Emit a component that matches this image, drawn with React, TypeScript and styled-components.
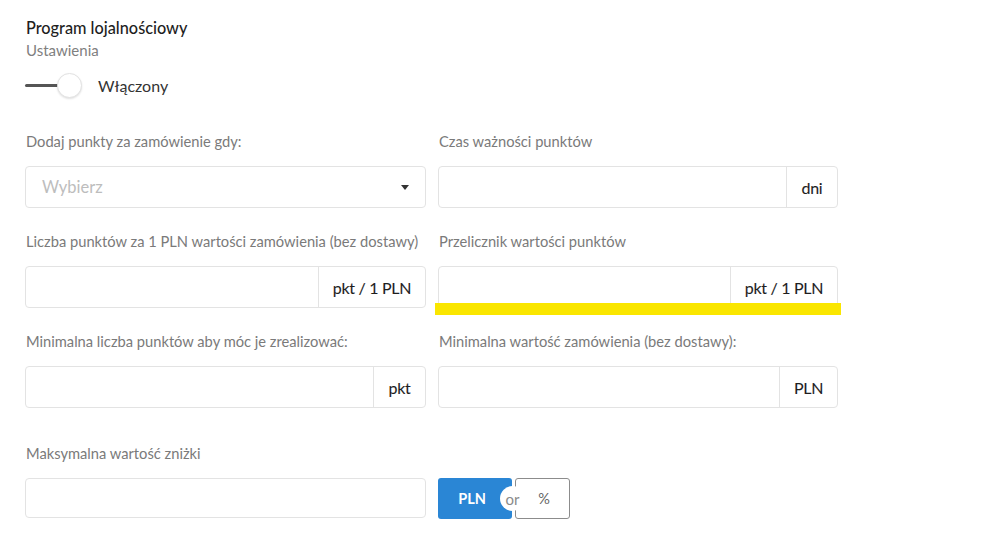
import React from 'react'
import styled, { createGlobalStyle } from 'styled-components'

const GlobalStyle = createGlobalStyle`
  html, body {
    margin: 0;
    padding: 0;
    background: #ffffff;
  }

  body {
    font-family: Lato, 'Open Sans', sans-serif;
    color: #333333;
  }
`

const Page = styled.div`
  position: relative;
  width: 1000px;
  height: 546px;
  padding: 18px 0 0 25px;
  box-sizing: border-box;
`

const Title = styled.h1`
  margin: 0;
  font-size: 16.3px;
  line-height: 20px;
  font-weight: 500;
  color: #1e1e1e;
  padding-left: 1px;
`

const Subtitle = styled.div`
  margin-top: 4px;
  font-size: 15px;
  line-height: 16px;
  color: #808080;
  padding-left: 1px;
`

const ToggleRow = styled.label`
  display: flex;
  align-items: center;
  height: 26px;
  margin-top: 14px;
  gap: 16px;
  font-size: 16px;
  color: #333333;
`

const Switch = styled.span`
  position: relative;
  display: inline-block;
  width: 57px;
  height: 26px;
`

const Track = styled.span`
  position: absolute;
  left: 0;
  right: 20px;
  top: 12px;
  height: 3px;
  background: #555555;
  border-radius: 2px;
`

const Knob = styled.span`
  position: absolute;
  left: 32px;
  top: 1px;
  width: 23px;
  height: 23px;
  border-radius: 50%;
  background: #ffffff;
  border: 1px solid #e2e2e2;
  box-shadow: 0 1px 2px rgba(0, 0, 0, 0.12);
`

const Grid = styled.div`
  display: grid;
  grid-template-columns: 401px 400px;
  column-gap: 12px;
  margin-top: 35px;
`

const Field = styled.div<{ $gap?: number }>`
  display: flex;
  flex-direction: column;
  margin-bottom: ${(p) => p.$gap ?? 25}px;
`

const Label = styled.div`
  font-size: 14.7px;
  line-height: 16px;
  color: #7a7a7a;
  padding-left: 1px;
  margin-bottom: 17px;
  white-space: nowrap;
`

const InputGroup = styled.div<{ $height?: number }>`
  display: flex;
  height: ${(p) => p.$height ?? 42}px;
  border: 1px solid #e3e3e3;
  border-radius: 4px;
  box-sizing: border-box;
  background: #ffffff;
  overflow: hidden;
`

const TextInput = styled.input`
  flex: 1;
  min-width: 0;
  border: none;
  outline: none;
  padding: 0 16px;
  font: inherit;
  font-size: 16px;
  background: transparent;
`

const Addon = styled.div<{ $width: number }>`
  flex: 0 0 ${(p) => p.$width}px;
  display: flex;
  align-items: center;
  justify-content: center;
  border-left: 1px solid #e3e3e3;
  font-size: 16px;
  letter-spacing: -0.3px;
  color: #1e1e1e;
  -webkit-text-stroke: 0.1px #1e1e1e;
  box-sizing: border-box;
`

const Select = styled.div`
  display: flex;
  align-items: center;
  justify-content: space-between;
  height: 42px;
  padding: 0 16px 0 16px;
  border: 1px solid #e3e3e3;
  border-radius: 4px;
  box-sizing: border-box;
  font-size: 16.5px;
  color: #bdbdbd;
`

const Caret = styled.span`
  width: 0;
  height: 0;
  border-left: 4px solid transparent;
  border-right: 4px solid transparent;
  border-top: 5px solid #333333;
`

const UnitSwitch = styled.div`
  position: relative;
  display: flex;
  height: 41px;
  width: 132px;
`

const UnitButton = styled.button<{ $active?: boolean }>`
  width: ${(p) => (p.$active ? 74 : 55)}px;
  height: 100%;
  margin-left: ${(p) => (p.$active ? 0 : 3)}px;
  border: ${(p) => (p.$active ? 'none' : '1px solid #8c8c8c')};
  border-radius: 3px;
  background: ${(p) => (p.$active ? '#2a86d5' : '#ffffff')};
  color: ${(p) => (p.$active ? '#ffffff' : '#666666')};
  font-family: inherit;
  font-size: 14.5px;
  font-weight: ${(p) => (p.$active ? 700 : 400)};
  padding: ${(p) => (p.$active ? '0 6px 0 0' : '0 0 0 3px')};
  cursor: pointer;
`

const OrBadge = styled.span`
  position: absolute;
  left: 62px;
  top: 8px;
  width: 25px;
  height: 25px;
  border-radius: 50%;
  background: #ffffff;
  display: flex;
  align-items: center;
  justify-content: center;
  font-size: 15px;
  color: #8a8a8a;
`

const Highlight = styled.div`
  position: absolute;
  left: 435px;
  top: 303px;
  width: 406px;
  height: 12px;
  background: #fae600;
`

const unitFields = [
  { label: 'Liczba punktów za 1 PLN wartości zamówienia (bez dostawy)', unit: 'pkt / 1 PLN', width: 107 },
  { label: 'Przelicznik wartości punktów', unit: 'pkt / 1 PLN', width: 107 },
  { label: 'Minimalna liczba punktów aby móc je zrealizować:', unit: 'pkt', width: 52 },
  { label: 'Minimalna wartość zamówienia (bez dostawy):', unit: 'PLN', width: 58 },
]

export default function App() {
  return (
    <>
      <GlobalStyle />
      <Page>
        <Title>Program lojalnościowy</Title>
        <Subtitle>Ustawienia</Subtitle>
        <ToggleRow>
          <Switch>
            <Track />
            <Knob />
          </Switch>
          Włączony
        </ToggleRow>

        <Grid>
          <Field>
            <Label>Dodaj punkty za zamówienie gdy:</Label>
            <Select>
              Wybierz
              <Caret />
            </Select>
          </Field>
          <Field>
            <Label>Czas ważności punktów</Label>
            <InputGroup>
              <TextInput />
              <Addon $width={51}>dni</Addon>
            </InputGroup>
          </Field>

          {unitFields.map((f, i) => (
            <Field key={f.label} $gap={i >= 2 ? 37 : 25}>
              <Label>{f.label}</Label>
              <InputGroup>
                <TextInput />
                <Addon $width={f.width}>{f.unit}</Addon>
              </InputGroup>
            </Field>
          ))}

          <Field $gap={0}>
            <Label>Maksymalna wartość zniżki</Label>
            <InputGroup $height={40}>
              <TextInput />
            </InputGroup>
          </Field>
          <Field $gap={0}>
            <Label>&nbsp;</Label>
            <UnitSwitch>
              <UnitButton $active>PLN</UnitButton>
              <UnitButton>%</UnitButton>
              <OrBadge>or</OrBadge>
            </UnitSwitch>
          </Field>
        </Grid>

        <Highlight />
      </Page>
    </>
  )
}
